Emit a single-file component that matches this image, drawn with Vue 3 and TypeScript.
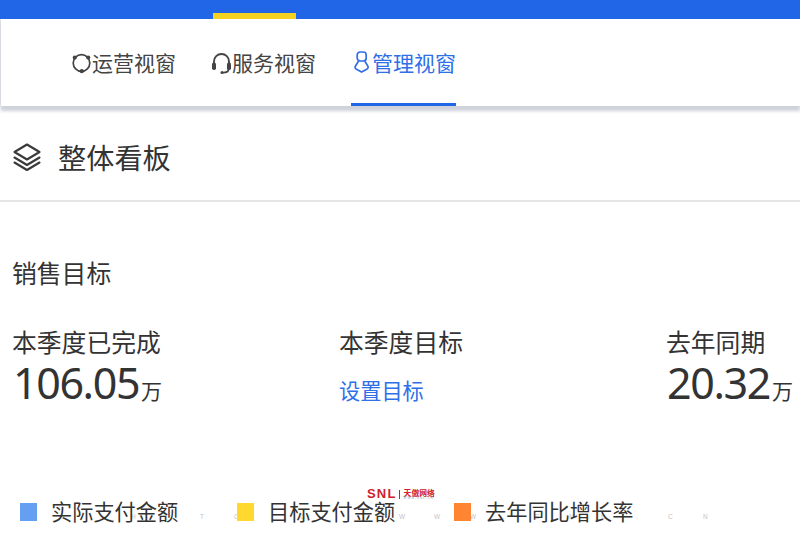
<script setup lang="ts">
interface Tab { label: string; active?: boolean; icon: 'ops' | 'service' | 'admin' }
const tabs: Tab[] = [
  { label: '运营视窗', icon: 'ops' },
  { label: '服务视窗', icon: 'service' },
  { label: '管理视窗', icon: 'admin', active: true },
]
const legend = [
  { label: '实际支付金额', color: '#659ff2' },
  { label: '目标支付金额', color: '#ffd92e' },
  { label: '去年同比增长率', color: '#ff8533' },
]
const marks = [
  { ch: 'H', x: 131 }, { ch: 'T', x: 200 }, { ch: 'O', x: 234 }, { ch: 'G', x: 300 },
  { ch: 'W', x: 399 }, { ch: 'W', x: 434 }, { ch: 'W', x: 470 }, { ch: '.', x: 503 },
  { ch: 'S', x: 535 }, { ch: 'N', x: 569 }, { ch: 'L', x: 601 }, { ch: '.', x: 636 },
  { ch: 'C', x: 668 }, { ch: 'N', x: 703 },
]
</script>

<template>
  <div class="page">
    <div class="topbar"><div class="top-mark"></div></div>
    <nav class="nav">
      <div v-for="t in tabs" :key="t.label" class="tab" :class="{ active: t.active }">
        <svg v-if="t.icon === 'ops'" class="ico" width="21" height="22" viewBox="0 0 21 22" fill="none" stroke="currentColor" stroke-width="1.7">
          <circle cx="10.5" cy="11" r="8.3" />
          <circle cx="3.8" cy="5.6" r="2.1" fill="currentColor" stroke="none" />
          <circle cx="17.2" cy="5.6" r="2.1" fill="currentColor" stroke="none" />
          <circle cx="10.8" cy="19.2" r="2.1" fill="currentColor" stroke="none" />
        </svg>
        <svg v-else-if="t.icon === 'service'" class="ico" width="21" height="22" viewBox="0 0 21 22" fill="none" stroke="currentColor" stroke-width="1.9">
          <path d="M3 12V9.5a7.5 7.5 0 0 1 15 0V12" />
          <rect x="1" y="10.5" width="4" height="7.5" rx="1.8" fill="currentColor" stroke="none" />
          <rect x="16" y="10.5" width="4" height="7.5" rx="1.8" fill="currentColor" stroke="none" />
          <path d="M17.6 17c0 2.6-2.2 3.6-5.6 3.6" />
          <circle cx="11" cy="20.4" r="1.5" fill="currentColor" stroke="none" />
        </svg>
        <svg v-else class="ico" width="21" height="22" viewBox="0 0 21 22" fill="none" stroke="currentColor" stroke-width="1.7" stroke-linejoin="round">
          <rect x="6.2" y="1" width="9" height="9" rx="3" />
          <path d="M7.6 10 4.4 15.2c-.6 1.1-.3 2 .6 2.7l5.6 3.2 5.6-3.2c.9-.7 1.2-1.6.6-2.7L13.8 10" />
        </svg>
        <span>{{ t.label }}</span>
      </div>
    </nav>

    <header class="head">
      <svg class="layers" width="30" height="30" viewBox="0 0 30 30" fill="none" stroke="#3a3a3a" stroke-width="2.1" stroke-linejoin="round" stroke-linecap="round">
        <path d="M15 2.5 27.5 10 15 17.5 2.5 10Z" />
        <path d="M2.5 15.5 15 23 27.5 15.5" />
        <path d="M2.5 20.5 15 28 27.5 20.5" />
      </svg>
      <h1>整体看板</h1>
    </header>

    <section class="sales">
      <h2>销售目标</h2>
      <div class="stats">
        <div class="stat">
          <div class="label">本季度已完成</div>
          <div class="value"><b>106.05</b><span>万</span></div>
        </div>
        <div class="stat">
          <div class="label">本季度目标</div>
          <div class="link">设置目标</div>
        </div>
        <div class="stat">
          <div class="label">去年同期</div>
          <div class="value"><b>20.32</b><span>万</span></div>
        </div>
      </div>
      <div class="legend">
        <div v-for="l in legend" :key="l.label" class="item">
          <i :style="{ background: l.color }"></i><span>{{ l.label }}</span>
        </div>
      </div>
    </section>

    <div class="wm">
      <b>SNL</b><em></em>
      <div class="wm-name"><strong>天傲网络</strong><small>WWW.SNL.CN</small></div>
    </div>
    <span v-for="m in marks" :key="m.x" class="mark" :style="{ left: m.x + 'px' }">{{ m.ch }}</span>
  </div>
</template>

<style>
html, body { margin: 0; background: #fff; overflow: hidden; }
</style>

<style scoped>
.page {
  position: relative;
  width: 800px;
  height: 533px;
  overflow: hidden;
  background: #fff;
  color: #333;
  font-family: "Noto Sans", "Noto Sans CJK SC", sans-serif;
}
.topbar {
  position: relative;
  z-index: 2;
  height: 19px;
  background: #2166e6;
}
.top-mark {
  position: absolute;
  left: 213px;
  bottom: 0;
  width: 83px;
  height: 6px;
  background: #f4d222;
}
.nav {
  position: relative;
  display: flex;
  height: 87px;
  margin-left: 1px;
  padding-left: 70px;
  gap: 35px;
  box-sizing: border-box;
  background: #fff;
  box-shadow: 0 5px 3px #cfd2da, -1px 0 2px #d5d8e0, 0 0 7px #c9ccd4;
}
.tab {
  display: flex;
  align-items: center;
  height: 87px;
  box-sizing: border-box;
  padding-bottom: 2px;
  font-size: 21px;
  color: #444;
}
.tab.active {
  color: #2f6fe8;
  border-bottom: 3px solid #2166e6;
  padding-top: 3px;
}
.ico { flex: none; margin-top: 3px; }
.active .ico { margin-top: 1px; }
.head {
  display: flex;
  align-items: center;
  height: 96px;
  box-sizing: border-box;
  padding: 10px 0 0 12px;
  gap: 16px;
  border-bottom: 2px solid #e5e5e5;
}
.layers { flex: none; margin-top: -2px; }
h1 {
  margin: 0;
  font-size: 28.2px;
  font-weight: 400;
  line-height: 38px;
  color: #333;
}
.sales { padding: 54px 0 0 12px; }
h2 {
  margin: 0;
  font-size: 24.8px;
  font-weight: 400;
  line-height: 34px;
  color: #333;
}
.stats {
  display: grid;
  grid-template-columns: 327px 327px 327px;
  margin-top: 35px;
}
.label { font-size: 24.8px; line-height: 34px; color: #333; }
.value { display: flex; align-items: baseline; height: 48px; padding-left: 1px; }
.value b {
  font-size: 43px;
  font-weight: 400;
  letter-spacing: -1.4px;
  line-height: 48px;
  color: #333;
}
.value span { font-size: 21px; margin-left: 2px; color: #333; }
.link { font-size: 21.2px; line-height: 30px; margin-top: 17px; color: #2f6fe8; }
.legend {
  position: relative;
  z-index: 1;
  display: flex;
  margin: 90px 0 0 8px;
}
.item {
  display: flex;
  align-items: center;
  width: 217px;
  font-size: 21.2px;
  line-height: 30px;
  color: #333;
}
.item i { width: 17px; height: 18px; margin-right: 14px; flex: none; }
.wm {
  position: absolute;
  z-index: 2;
  left: 367px;
  top: 487px;
  display: flex;
  align-items: center;
  height: 14px;
  color: #d0202e;
}
.wm b { font: 700 13px/14px "Liberation Sans", sans-serif; letter-spacing: 1.2px; }
.wm em { width: 1px; height: 9px; margin: 0 4px 0 2px; background: #555; }
.wm-name { display: flex; flex-direction: column; align-items: stretch; }
.wm strong { font: 700 7.8px/8px "Noto Sans CJK SC", sans-serif; }
.wm small { font: 3px/3px "Liberation Sans", sans-serif; letter-spacing: 1px; color: #999; }
.mark {
  position: absolute;
  top: 512px;
  font: 6.5px/9px "Liberation Sans", sans-serif;
  color: #c4c4c4;
}
</style>
